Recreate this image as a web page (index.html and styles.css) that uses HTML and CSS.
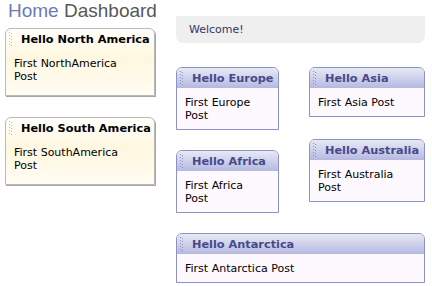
FILE: index.html
```html
<!DOCTYPE html>
<html lang="en">

<head>
    <meta charset="utf-8">
    <meta name="viewport" content="width=device-width, initial-scale=1.0">
    <title>Dashboard</title>
    <link rel="stylesheet" href="styles.css">
</head>

<body>

    <div class="side">

        <!-- venstre kolonne med titel og de gule bokse -->
        <div class="venstre">
            <h1 class="titel"><span class="home">Home</span> Dashboard</h1>

            <div class="boks gul">
                <div class="hoved">
                    <svg class="greb" width="4" height="15" viewBox="0 0 4 15">
                        <rect x="0" y="0" width="1" height="1" /><rect x="2" y="1" width="1" height="1" />
                        <rect x="0" y="3" width="1" height="1" /><rect x="2" y="4" width="1" height="1" />
                        <rect x="0" y="6" width="1" height="1" /><rect x="2" y="7" width="1" height="1" />
                        <rect x="0" y="9" width="1" height="1" /><rect x="2" y="10" width="1" height="1" />
                        <rect x="0" y="12" width="1" height="1" /><rect x="2" y="13" width="1" height="1" />
                    </svg>
                    <span>Hello North America</span>
                </div>
                <div class="indhold">First NorthAmerica Post</div>
            </div>

            <div class="boks gul">
                <div class="hoved">
                    <svg class="greb" width="4" height="15" viewBox="0 0 4 15">
                        <rect x="0" y="0" width="1" height="1" /><rect x="2" y="1" width="1" height="1" />
                        <rect x="0" y="3" width="1" height="1" /><rect x="2" y="4" width="1" height="1" />
                        <rect x="0" y="6" width="1" height="1" /><rect x="2" y="7" width="1" height="1" />
                        <rect x="0" y="9" width="1" height="1" /><rect x="2" y="10" width="1" height="1" />
                        <rect x="0" y="12" width="1" height="1" /><rect x="2" y="13" width="1" height="1" />
                    </svg>
                    <span>Hello South America</span>
                </div>
                <div class="indhold">First SouthAmerica Post</div>
            </div>
        </div>

        <!-- hoveddel -->
        <div class="hoveddel">
            <div class="velkommen">Welcome!</div>

            <div class="kolonner">
                <div class="kolonne midt">
                    <div class="boks bla">
                        <div class="hoved">
                            <svg class="greb" width="4" height="15" viewBox="0 0 4 15">
                                <rect x="0" y="0" width="1" height="1" /><rect x="2" y="1" width="1" height="1" />
                                <rect x="0" y="3" width="1" height="1" /><rect x="2" y="4" width="1" height="1" />
                                <rect x="0" y="6" width="1" height="1" /><rect x="2" y="7" width="1" height="1" />
                                <rect x="0" y="9" width="1" height="1" /><rect x="2" y="10" width="1" height="1" />
                                <rect x="0" y="12" width="1" height="1" /><rect x="2" y="13" width="1" height="1" />
                            </svg>
                            <span>Hello Europe</span>
                        </div>
                        <div class="indhold">First Europe Post</div>
                    </div>

                    <div class="boks bla">
                        <div class="hoved">
                            <svg class="greb" width="4" height="15" viewBox="0 0 4 15">
                                <rect x="0" y="0" width="1" height="1" /><rect x="2" y="1" width="1" height="1" />
                                <rect x="0" y="3" width="1" height="1" /><rect x="2" y="4" width="1" height="1" />
                                <rect x="0" y="6" width="1" height="1" /><rect x="2" y="7" width="1" height="1" />
                                <rect x="0" y="9" width="1" height="1" /><rect x="2" y="10" width="1" height="1" />
                                <rect x="0" y="12" width="1" height="1" /><rect x="2" y="13" width="1" height="1" />
                            </svg>
                            <span>Hello Africa</span>
                        </div>
                        <div class="indhold">First Africa Post</div>
                    </div>
                </div>

                <div class="kolonne hojre">
                    <div class="boks bla">
                        <div class="hoved">
                            <svg class="greb" width="4" height="15" viewBox="0 0 4 15">
                                <rect x="0" y="0" width="1" height="1" /><rect x="2" y="1" width="1" height="1" />
                                <rect x="0" y="3" width="1" height="1" /><rect x="2" y="4" width="1" height="1" />
                                <rect x="0" y="6" width="1" height="1" /><rect x="2" y="7" width="1" height="1" />
                                <rect x="0" y="9" width="1" height="1" /><rect x="2" y="10" width="1" height="1" />
                                <rect x="0" y="12" width="1" height="1" /><rect x="2" y="13" width="1" height="1" />
                            </svg>
                            <span>Hello Asia</span>
                        </div>
                        <div class="indhold">First Asia Post</div>
                    </div>

                    <div class="boks bla">
                        <div class="hoved">
                            <svg class="greb" width="4" height="15" viewBox="0 0 4 15">
                                <rect x="0" y="0" width="1" height="1" /><rect x="2" y="1" width="1" height="1" />
                                <rect x="0" y="3" width="1" height="1" /><rect x="2" y="4" width="1" height="1" />
                                <rect x="0" y="6" width="1" height="1" /><rect x="2" y="7" width="1" height="1" />
                                <rect x="0" y="9" width="1" height="1" /><rect x="2" y="10" width="1" height="1" />
                                <rect x="0" y="12" width="1" height="1" /><rect x="2" y="13" width="1" height="1" />
                            </svg>
                            <span>Hello Australia</span>
                        </div>
                        <div class="indhold">First Australia Post</div>
                    </div>
                </div>
            </div>

            <div class="boks bla">
                <div class="hoved">
                    <svg class="greb" width="4" height="15" viewBox="0 0 4 15">
                        <rect x="0" y="0" width="1" height="1" /><rect x="2" y="1" width="1" height="1" />
                        <rect x="0" y="3" width="1" height="1" /><rect x="2" y="4" width="1" height="1" />
                        <rect x="0" y="6" width="1" height="1" /><rect x="2" y="7" width="1" height="1" />
                        <rect x="0" y="9" width="1" height="1" /><rect x="2" y="10" width="1" height="1" />
                        <rect x="0" y="12" width="1" height="1" /><rect x="2" y="13" width="1" height="1" />
                    </svg>
                    <span>Hello Antarctica</span>
                </div>
                <div class="indhold">First Antarctica Post</div>
            </div>
        </div>

    </div>

</body>

</html>
```

FILE: styles.css
```css
body {
    margin: 0;
    background-color: white;
    font-family: 'DejaVu Sans', Verdana, sans-serif;
    font-size: 11px;
    color: black;
}

.side {
    display: flex;
    align-items: flex-start;
}

/* venstre kolonne */
.venstre {
    width: 150px;
    margin-left: 5px;
}

.venstre .boks {
    margin-bottom: 21px;
}

.titel {
    margin: 0 0 7px 3px;
    font-family: 'Liberation Sans', Arial, sans-serif;
    font-weight: normal;
    font-size: 19px;
    line-height: 21px;
    white-space: nowrap;
    color: #585858;
}

.home {
    color: #6b7bb5;
}

/* hoveddel */
.hoveddel {
    width: 249px;
    margin-left: 21px;
    margin-top: 16px;
    display: flex;
    flex-direction: column;
    gap: 20px;
}

.velkommen {
    background-color: #efefef;
    color: #34346c;
    padding: 7px 13px;
    line-height: 13px;
    border-radius: 0 0 7px 7px;
    margin-bottom: 4px;
}

.kolonner {
    display: flex;
    justify-content: space-between;
    align-items: flex-start;
}

.kolonne {
    display: flex;
    flex-direction: column;
    gap: 20px;
}

.midt {
    width: 103px;
}

.hojre {
    width: 116px;
    gap: 22px;
}

/********************  BOKSE  ********************/

.boks {
    box-sizing: border-box;
    border: 1px solid #8a92c6;
    border-radius: 6px 6px 0 0;
}

.hoved {
    display: flex;
    align-items: center;
    gap: 8px;
    height: 20px;
    padding: 1px 0 0 3px;
    box-sizing: border-box;
    font-weight: bold;
    font-size: 11.3px;
    white-space: nowrap;
    border-radius: 5px 5px 0 0;
}

.greb {
    flex: none;
}

.indhold {
    padding: 8px 14px 7px 8px;
    line-height: 13px;
}

/* blaa bokse */
.bla {
    background-color: #fdf9ff;
}

.bla .hoved {
    background: linear-gradient(#e8e9f4, #b5b9e1);
    color: #474a8a;
}

.bla .greb {
    fill: #8e90b4;
}

/* gule bokse */
.gul {
    border-color: #b9b9b9;
    box-shadow: 1px 1px 0 #a6a6a6;
    background: linear-gradient(#fffefa, #fff7e0 45%, #fffcf2);
}

.gul .hoved {
    color: black;
}

.gul .greb {
    fill: #b8b8b0;
}

.gul .indhold {
    padding-bottom: 12px;
}
```
